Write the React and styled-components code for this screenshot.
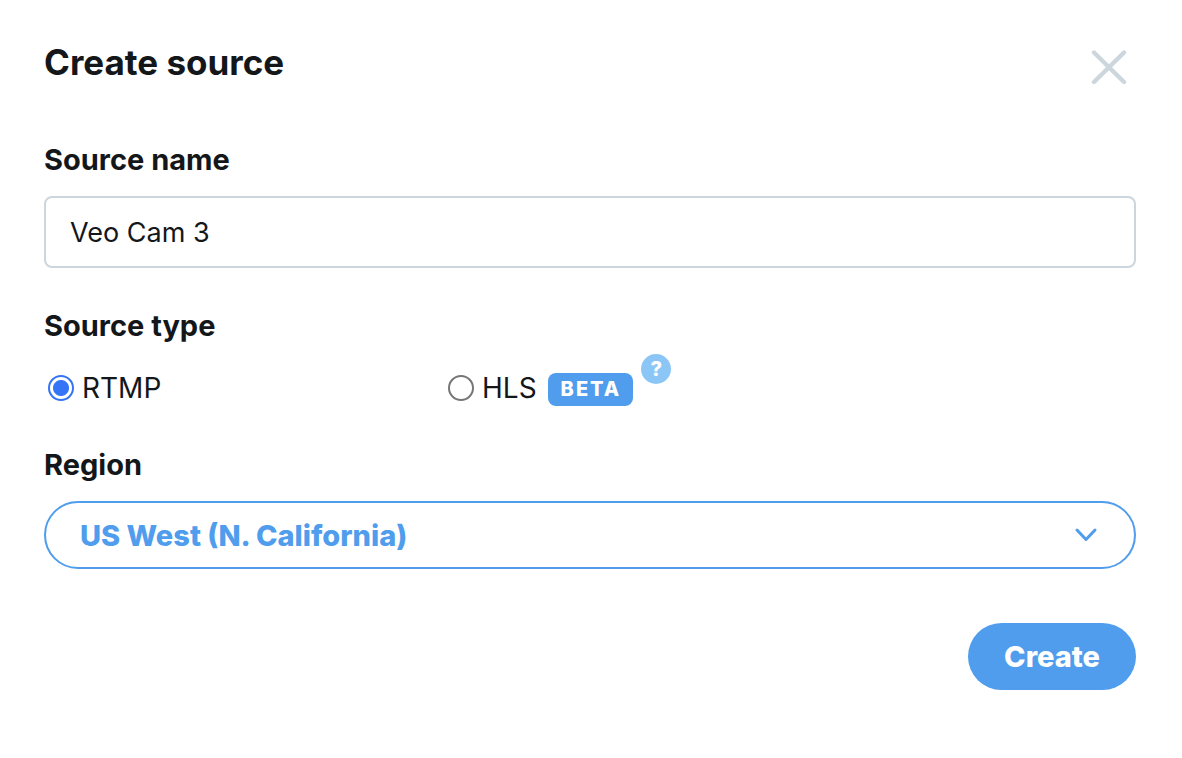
import React, { useState } from 'react';
import styled, { createGlobalStyle } from 'styled-components';

const regions = [
  'US West (N. California)',
  'US East (N. Virginia)',
  'EU (Ireland)',
];

export default function App() {
  const [name, setName] = useState('Veo Cam 3');
  const [type, setType] = useState('rtmp');
  const [region, setRegion] = useState(regions[0]);

  return (
    <>
      <GlobalStyle />
      <Form onSubmit={(e) => e.preventDefault()}>
        <Header>
          <Title>Create source</Title>
          <CloseButton type="button" aria-label="Close">
            <svg width="36" height="36" viewBox="0 0 36 36" fill="none">
              <path d="M3 3.5L33 33M33 3.5L3 33" stroke="#ccd6dd" strokeWidth="4.4" strokeLinecap="round" />
            </svg>
          </CloseButton>
        </Header>

        <Label htmlFor="source-name">Source name</Label>
        <TextInput id="source-name" value={name} onChange={(e) => setName(e.target.value)} />

        <TypeGroup>
          <Legend>Source type</Legend>
          <Options>
            <Option>
              <Radio name="type" checked={type === 'rtmp'} onChange={() => setType('rtmp')} />
              RTMP
            </Option>
            <OptionCell>
              <Option>
                <Radio name="type" checked={type === 'hls'} onChange={() => setType('hls')} />
                HLS
                <Badge>BETA</Badge>
              </Option>
              <HelpButton type="button" aria-label="About HLS">?</HelpButton>
            </OptionCell>
          </Options>
        </TypeGroup>

        <Label htmlFor="region">Region</Label>
        <SelectWrapper>
          <Select id="region" value={region} onChange={(e) => setRegion(e.target.value)}>
            {regions.map((r) => <option key={r}>{r}</option>)}
          </Select>
          <Chevron width="24" height="16" viewBox="0 0 24 16" fill="none">
            <path d="M3 3L12 12.5L21 3" stroke="#4f9dec" strokeWidth="3" strokeLinecap="round" strokeLinejoin="round" />
          </Chevron>
        </SelectWrapper>

        <Footer>
          <CreateButton type="submit">Create</CreateButton>
        </Footer>
      </Form>
    </>
  );
}

const GlobalStyle = createGlobalStyle`
  * { box-sizing: border-box; }
  body {
    margin: 0;
    background: white;
    color: #14171a;
    font-family: Inter, sans-serif;
  }
  button, input, select { font-family: inherit; }
`;

const Form = styled.form`
  display: flex;
  flex-direction: column;
  padding: 38px 46px 38px 44px;
`;

const Header = styled.header`
  display: flex;
  justify-content: space-between;
  align-items: flex-start;
  margin-bottom: 54px;
`;

const Title = styled.h1`
  margin: 0;
  font-size: 35px;
  line-height: 48px;
  font-weight: 700;
`;

const CloseButton = styled.button`
  display: flex;
  margin: 11px 9px 0 0;
  padding: 0;
  border: none;
  background: none;
  cursor: pointer;
`;

const Label = styled.label`
  font-size: 29px;
  line-height: 40px;
  font-weight: 700;
  margin-bottom: 16px;
`;

const TextInput = styled.input`
  width: 100%;
  height: 72px;
  padding: 0 24px;
  border: 2px solid #ccd6dd;
  border-radius: 8px;
  background: white;
  color: #14171a;
  font-size: 27px;
`;

const TypeGroup = styled.fieldset`
  margin: 38px 0 37px;
  padding: 0;
  border: none;
`;

const Legend = styled.legend`
  padding: 0;
  font-size: 29px;
  line-height: 40px;
  font-weight: 700;
`;

const Options = styled.div`
  display: grid;
  grid-template-columns: 400px 1fr;
  align-items: start;
  padding: 8px 4px 0;
  height: 62px;
`;

const OptionCell = styled.div`
  display: flex;
  align-items: flex-start;
  gap: 8px;
`;

const Option = styled.label`
  display: flex;
  align-items: center;
  gap: 8px;
  height: 67px;
  font-size: 28px;
`;

const Radio = styled.input.attrs({ type: 'radio' })`
  appearance: none;
  width: 26px;
  height: 26px;
  margin: 0;
  border: 2px solid #767676;
  border-radius: 50%;
  background: white;
  &:checked {
    border-color: #3574f5;
    background: radial-gradient(circle, #3574f5 7.5px, white 8.5px);
  }
`;

const Badge = styled.span`
  margin: 4px 0 0 3px;
  padding: 0 12px 0 13px;
  border-radius: 8px;
  background: #4f9dec;
  color: white;
  font-size: 20px;
  line-height: 33px;
  font-weight: 800;
  letter-spacing: 2px;
`;

const HelpButton = styled.button`
  width: 30px;
  height: 30px;
  padding: 0;
  border: none;
  border-radius: 50%;
  background: #8bc6f6;
  color: white;
  font-size: 20px;
  line-height: 30px;
  font-weight: 800;
  cursor: pointer;
`;

const SelectWrapper = styled.div`
  position: relative;
`;

const Select = styled.select`
  appearance: none;
  display: block;
  width: 100%;
  height: 68px;
  padding: 0 72px 0 34px;
  border: 2px solid #4f9dec;
  border-radius: 34px;
  background: white;
  color: #4f9dec;
  font-size: 29px;
  font-weight: 800;
  cursor: pointer;
`;

const Chevron = styled.svg`
  position: absolute;
  top: 26px;
  right: 38px;
  pointer-events: none;
`;

const Footer = styled.footer`
  display: flex;
  justify-content: flex-end;
  margin-top: 54px;
`;

const CreateButton = styled.button`
  height: 67px;
  padding: 0 36px;
  border: none;
  border-radius: 34px;
  background: #4f9dec;
  color: white;
  font-size: 29px;
  font-weight: 800;
  cursor: pointer;
`;
